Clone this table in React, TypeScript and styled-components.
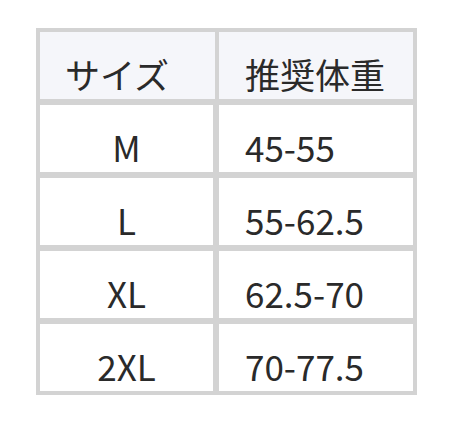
import React from "react";
import styled, { createGlobalStyle } from "styled-components";

const Global = createGlobalStyle`
  html, body { margin: 0; padding: 0; background: #ffffff; }
  body { font-family: "Noto Sans CJK JP", "Noto Sans", sans-serif; }
`;

const Page = styled.div`
  padding: 28px 0 0 36px;
`;

const Table = styled.div`
  width: 373px;
  background: #d3d3d3;
  padding: 4px;
  display: flex;
  flex-direction: column;
  gap: 6px;
`;

const Row = styled.div<{ $head?: boolean }>`
  display: grid;
  grid-template-columns: ${(p) => (p.$head ? "175px 194px" : "173px 194px")};
  column-gap: ${(p) => (p.$head ? "4px" : "6px")};
  height: 67px;
`;

const Cell = styled.div<{ $head?: boolean; $center?: boolean; $inset?: number }>`
  display: flex;
  align-items: flex-end;
  justify-content: ${(p) => (p.$center ? "center" : "flex-start")};
  padding: 0 0 8px ${(p) => (p.$center ? 0 : p.$inset ?? 25)}px;
  background: ${(p) => (p.$head ? "#f5f6fa" : "#ffffff")};
  color: #2a2a2a;
  font-family: "Noto Sans CJK JP", "Noto Sans", sans-serif;
  font-size: 35px;
  line-height: 35px;
  font-weight: 400;
  box-sizing: border-box;
`;

const rows: [string, string][] = [
  ["M", "45-55"],
  ["L", "55-62.5"],
  ["XL", "62.5-70"],
  ["2XL", "70-77.5"],
];

export default function App() {
  return (
    <>
      <Global />
      <Page>
        <Table>
          <Row $head>
            <Cell $head>サイズ</Cell>
            <Cell $head $inset={26}>推奨体重</Cell>
          </Row>
          {rows.map(([size, weight]) => (
            <Row key={size}>
              <Cell $center>{size}</Cell>
              <Cell $inset={26}>{weight}</Cell>
            </Row>
          ))}
        </Table>
      </Page>
    </>
  );
}
